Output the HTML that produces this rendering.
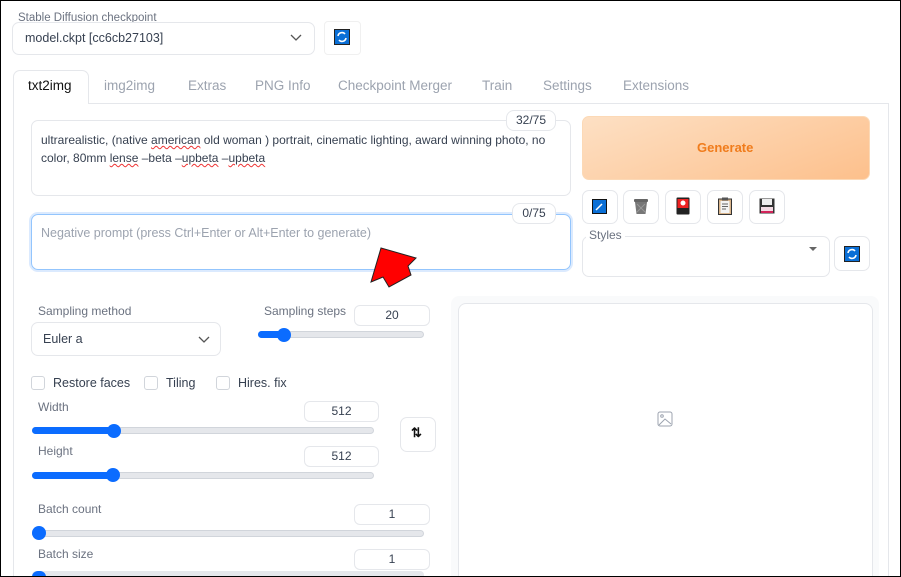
<!DOCTYPE html><html style="overflow:hidden;width:901px;height:577px"><head><style>
*{box-sizing:border-box}
body{margin:0;width:901px;height:577px;overflow:hidden;background:#fff;font-family:"Liberation Sans",sans-serif;position:relative}
.a{position:absolute}
.frame{left:0;top:0;width:901px;height:577px;border:1px solid #000;z-index:10;pointer-events:none}
.box{border:1px solid #e5e7eb;border-radius:7px;background:#fff}
.lbl{font-size:12px;color:#6b7280}
.t{font-size:12.5px;color:#374151}
.tab{font-size:13.5px;color:#9ca3af;top:78px}
.track{height:7px;background:#e5e7eb;border:1px solid #d1d5db;border-radius:4px}
.fill{height:7px;background:#0b6cff;border-radius:4px}
.knob{width:14px;height:14px;border-radius:50%;background:#0b6cff}
.num{border:1px solid #e5e7eb;border-radius:6px;font-size:12px;color:#374151;text-align:center;line-height:19px;height:21px}
.cb{width:14px;height:14px;border:1px solid #d1d5db;border-radius:3px}
.ib{width:36px;height:34px;border:1px solid #e5e7eb;border-radius:7px;background:#fff}
u{text-decoration:underline wavy #e33;text-decoration-thickness:1px}
</style></head><body>
<div class="a frame"></div>
<div class="a lbl" style="left:18px;top:12px;font-size:11.5px">Stable Diffusion checkpoint</div>
<div class="a box" style="left:12px;top:22px;width:303px;height:33px"></div>
<div class="a t" style="left:25px;top:31px">model.ckpt [cc6cb27103]</div>
<svg class="a" style="left:290px;top:32px" width="12" height="10"><path d="M1 3l5 5 5-5" stroke="#555" fill="none" stroke-width="1.3"/></svg>
<div class="a" style="left:324px;top:21px;width:37px;height:34px;border:1px solid #f0f0f0;border-radius:4px"></div>
<svg class="a" style="left:334px;top:29px" width="16" height="16"><rect x=".5" y=".5" width="15" height="15" fill="#0a6fd6" stroke="#222"/><path d="M4 7a4 4 0 0 1 7-2M12 9a4 4 0 0 1-7 2" stroke="#fff" stroke-width="1.6" fill="none"/></svg>

<div class="a" style="left:13px;top:103px;width:876px;height:474px;border:1px solid #e5e7eb;border-bottom:none"></div>
<div class="a" style="left:13px;top:70px;width:76px;height:34px;border:1px solid #e5e7eb;border-bottom:none;border-radius:7px 7px 0 0;background:#fff"></div>
<div class="a" style="left:28px;top:78px;font-size:13.5px;color:#111">txt2img</div>
<div class="a tab" style="left:104px">img2img</div>
<div class="a tab" style="left:188px">Extras</div>
<div class="a tab" style="left:255px">PNG Info</div>
<div class="a tab" style="left:338px">Checkpoint Merger</div>
<div class="a tab" style="left:482px">Train</div>
<div class="a tab" style="left:543px">Settings</div>
<div class="a tab" style="left:623px">Extensions</div>

<div class="a box" style="left:31px;top:120px;width:540px;height:76px"></div>
<div class="a t" style="left:41px;top:131px;width:525px;line-height:18px;font-size:12px">ultrarealistic, (native <u>american</u> old woman ) portrait, cinematic lighting, award winning photo, no color, 80mm <u>lense</u> –beta –<u>upbeta</u> –<u>upbeta</u></div>
<div class="a num" style="left:506px;top:110px;width:50px;background:#fff;border-radius:8px">32/75</div>
<div class="a" style="left:31px;top:214px;width:540px;height:56px;border:1px solid #93c5fd;border-radius:7px;box-shadow:0 0 0 2px #dbeafe"></div>
<div class="a" style="left:41px;top:226px;font-size:12.5px;color:#9ca3af">Negative prompt (press Ctrl+Enter or Alt+Enter to generate)</div>
<div class="a num" style="left:512px;top:203px;width:44px;background:#fff;border-radius:8px">0/75</div>

<div class="a" style="left:582px;top:116px;width:288px;height:64px;border-radius:7px;background:linear-gradient(160deg,#fde0c4,#fdc08c);border:1px solid #fcd9b6"></div>
<div class="a" style="left:697px;top:140px;font-size:13px;font-weight:bold;color:#f07c1c">Generate</div>
<div class="a ib" style="left:582px;top:190px"></div><svg class="a" style="left:592px;top:199px" width="15" height="15"><rect x=".5" y=".5" width="14" height="14" fill="#0a6fd6" stroke="#111"/><path d="M4 11l6-6" stroke="#fff" stroke-width="1.5"/></svg>
<div class="a ib" style="left:623px;top:190px"></div><svg class="a" style="left:633px;top:198px" width="16" height="17"><rect x="1" y="1" width="14" height="3" rx="1" fill="#666"/><path d="M2 4h12l-1.5 12h-9z" fill="#777"/><path d="M4 6l8 8M12 6l-8 8" stroke="#999"/></svg>
<div class="a ib" style="left:665px;top:190px"></div><svg class="a" style="left:676px;top:197px" width="14" height="18"><rect x=".5" y=".5" width="13" height="17" rx="1" fill="#222"/><rect x="1.5" y="2" width="11" height="9" fill="#e22"/><circle cx="7" cy="6" r="2.5" fill="#fff"/></svg>
<div class="a ib" style="left:707px;top:190px"></div><svg class="a" style="left:718px;top:197px" width="14" height="18"><rect x=".5" y="2" width="13" height="15.5" fill="#d9b48a" stroke="#333"/><rect x="2.5" y="4" width="9" height="12" fill="#f3f3f3"/><rect x="4" y=".5" width="6" height="3" fill="#555"/><path d="M4 7h6M4 9.5h6M4 12h4" stroke="#666"/></svg>
<div class="a ib" style="left:749px;top:190px"></div><svg class="a" style="left:759px;top:198px" width="16" height="16"><rect x=".5" y=".5" width="15" height="15" fill="#333"/><rect x="3" y="1" width="10" height="6" fill="#eee"/><rect x="2" y="9" width="12" height="6" fill="#f3dbe4"/><rect x="2" y="13" width="12" height="2" fill="#d2245a"/></svg>

<div class="a box" style="left:582px;top:236px;width:248px;height:41px"></div>
<div class="a lbl" style="left:586px;top:228px;background:#fff;padding:0 3px;font-size:12px">Styles</div>
<svg class="a" style="left:808px;top:246px" width="10" height="6"><path d="M1 1h8l-4 4z" fill="#666"/></svg>
<div class="a ib" style="left:834px;top:236px;height:35px"></div>
<svg class="a" style="left:844px;top:246px" width="16" height="16"><rect x=".5" y=".5" width="15" height="15" fill="#0a6fd6" stroke="#222"/><path d="M4 7a4 4 0 0 1 7-2M12 9a4 4 0 0 1-7 2" stroke="#fff" stroke-width="1.6" fill="none"/></svg>

<svg class="a" style="left:0;top:0;z-index:5" width="901" height="577"><polygon points="381,248 416,258 408,266 411,275 389,287 383,277 371,282" fill="#f00" stroke="#222" stroke-width="1"/></svg>

<div class="a lbl" style="left:38px;top:304px">Sampling method</div>
<div class="a box" style="left:31px;top:322px;width:190px;height:34px"></div>
<div class="a t" style="left:43px;top:332px;font-size:12.5px">Euler a</div>
<svg class="a" style="left:198px;top:334px" width="12" height="10"><path d="M1 3l5 5 5-5" stroke="#555" fill="none" stroke-width="1.3"/></svg>
<div class="a lbl" style="left:264px;top:304px">Sampling steps</div>
<div class="a num" style="left:354px;top:305px;width:76px">20</div>
<div class="a track" style="left:258px;top:331px;width:166px"></div>
<div class="a fill" style="left:258px;top:331px;width:30px"></div>
<div class="a knob" style="left:277px;top:328px"></div>

<div class="a cb" style="left:31px;top:376px"></div><div class="a t" style="left:53px;top:376px;font-size:12.5px">Restore faces</div>
<div class="a cb" style="left:144px;top:376px"></div><div class="a t" style="left:166px;top:376px;font-size:12.5px">Tiling</div>
<div class="a cb" style="left:216px;top:376px"></div><div class="a t" style="left:238px;top:376px;font-size:12.5px">Hires. fix</div>

<div class="a lbl" style="left:38px;top:400px">Width</div>
<div class="a num" style="left:304px;top:401px;width:75px">512</div>
<div class="a track" style="left:32px;top:427px;width:342px"></div>
<div class="a fill" style="left:32px;top:427px;width:82px"></div>
<div class="a knob" style="left:107px;top:424px"></div>
<div class="a ib" style="left:400px;top:417px;width:36px;height:35px"></div>
<div class="a" style="left:411px;top:425px;font-size:13px;font-weight:bold;color:#111">⇅</div>
<div class="a lbl" style="left:38px;top:444px">Height</div>
<div class="a num" style="left:304px;top:446px;width:75px">512</div>
<div class="a track" style="left:32px;top:472px;width:342px"></div>
<div class="a fill" style="left:32px;top:472px;width:82px"></div>
<div class="a knob" style="left:106px;top:468px"></div>

<div class="a lbl" style="left:38px;top:502px">Batch count</div>
<div class="a num" style="left:354px;top:504px;width:76px">1</div>
<div class="a track" style="left:32px;top:530px;width:392px"></div>
<div class="a knob" style="left:32px;top:526px"></div>
<div class="a lbl" style="left:38px;top:547px">Batch size</div>
<div class="a num" style="left:354px;top:549px;width:76px">1</div>
<div class="a" style="left:32px;top:571px;width:392px;height:6px;background:#e5e7eb;border-radius:4px 4px 0 0"></div>
<div class="a" style="left:32px;top:571px;width:14px;height:6px;border-radius:7px 7px 0 0;background:#0b6cff"></div>

<div class="a" style="left:451px;top:296px;width:428px;height:281px;background:#f9fafb;border-radius:8px 8px 0 0"></div>
<div class="a" style="left:458px;top:303px;width:415px;height:274px;background:#fff;border:1px solid #e5e7eb;border-bottom:none;border-radius:8px 8px 0 0"></div>
<svg class="a" style="left:657px;top:411px" width="16" height="16"><rect x="1" y="1" width="14" height="14" rx="2" fill="none" stroke="#9ca3af"/><circle cx="5" cy="5" r="1.3" fill="none" stroke="#9ca3af"/><path d="M2 14l6-6 6 5" fill="none" stroke="#9ca3af"/></svg>
</body></html>
